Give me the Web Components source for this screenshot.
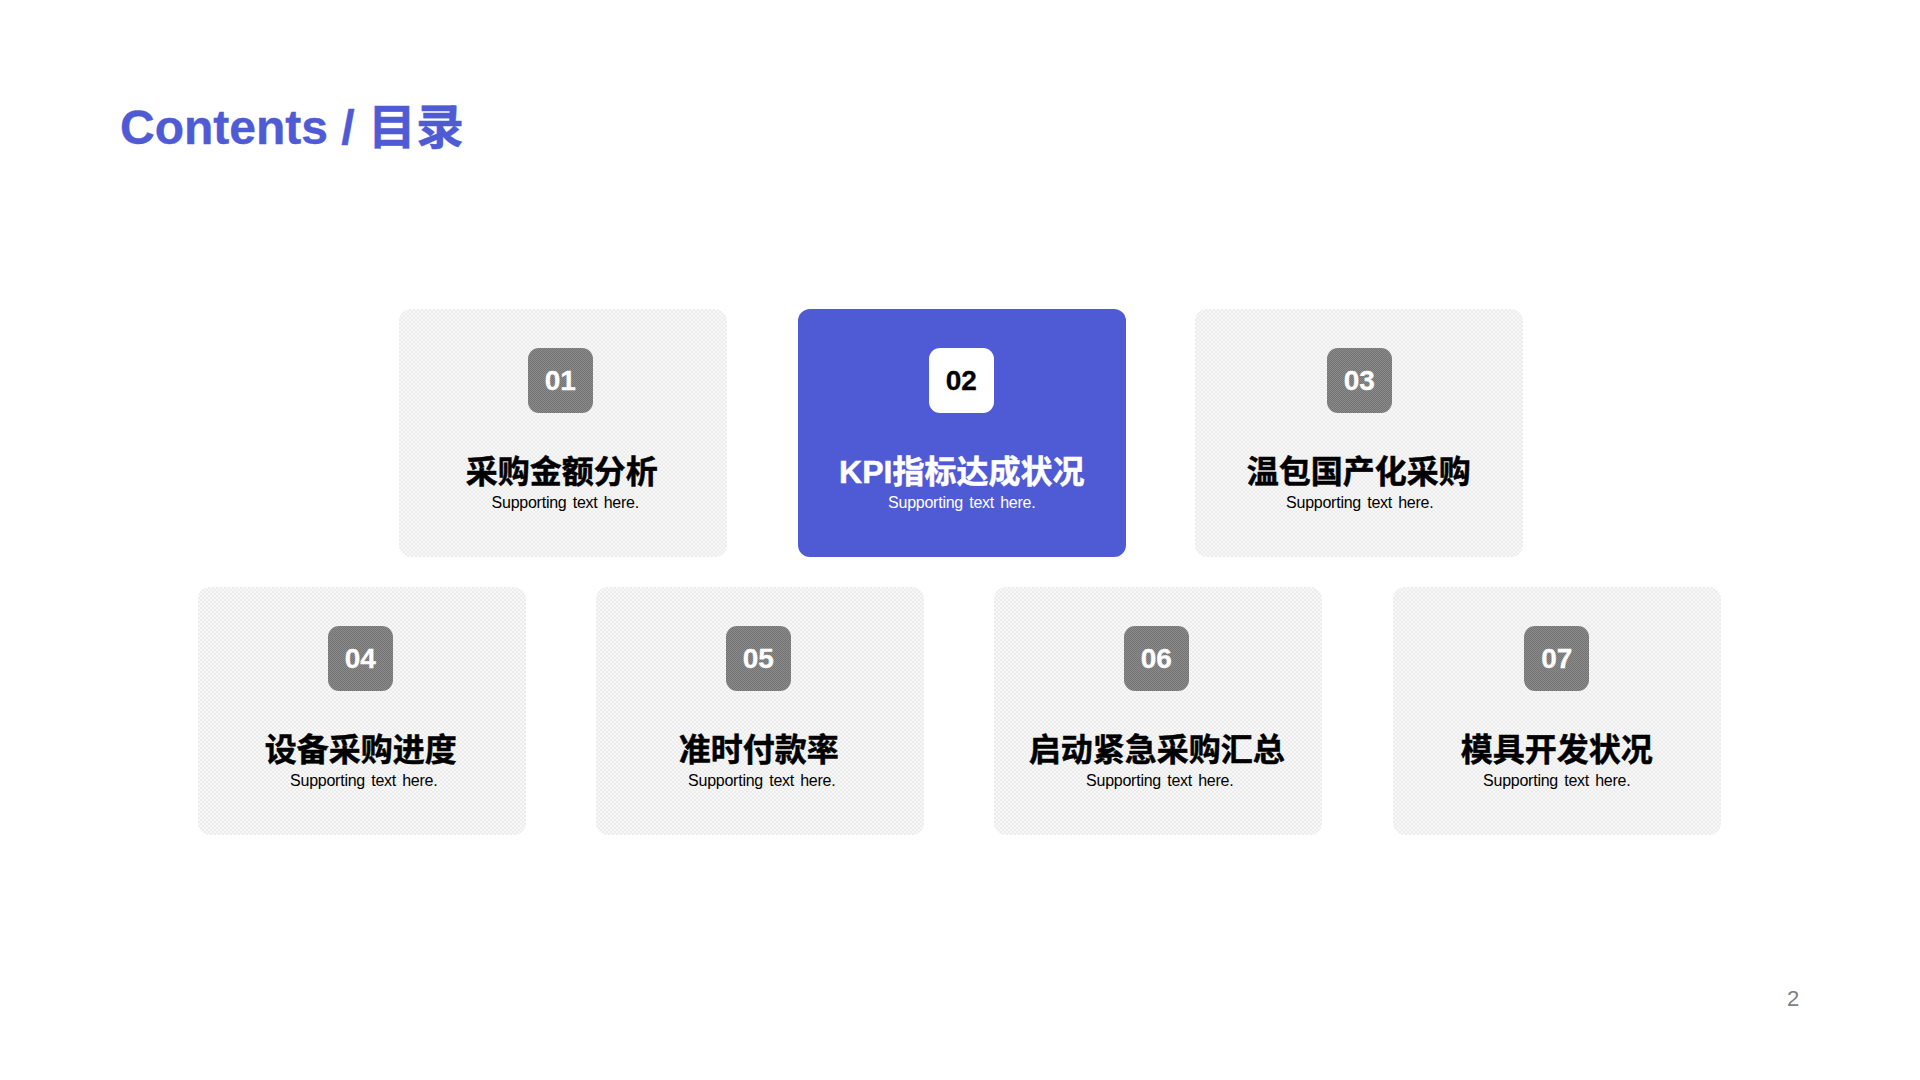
<!DOCTYPE html>
<html lang="zh"><head><meta charset="utf-8"><style>
html,body{margin:0;background:#fff}
</style></head><body>
<toc-slide heading="Contents / 目录" page="2">
<toc-row first>
<toc-card num="01" label="采购金额分析" style="--b:-2.5px;--t:-1px;--s:2.5px"></toc-card>
<toc-card num="02" label="KPI指标达成状况" active style="--ml:71.5px;--b:-.5px"></toc-card>
<toc-card num="03" label="温包国产化采购" style="--ml:69.5px;--s:1px;--b:.5px"></toc-card>
</toc-row>
<toc-row>
<toc-card num="04" label="设备采购进度" style="--b:-1.5px;--t:-1px;--s:2px"></toc-card>
<toc-card num="05" label="准时付款率" style="--ml:70.5px;--b:-1.5px;--t:-1px;--s:2px"></toc-card>
<toc-card num="06" label="启动紧急采购汇总" style="--ml:70.5px;--b:-1.5px;--t:-1px;--s:2px"></toc-card>
<toc-card num="07" label="模具开发状况" style="--ml:71.5px"></toc-card>
</toc-row>
</toc-slide>
<script>
class TocSlide extends HTMLElement{connectedCallback(){const s=this.attachShadow({mode:'open'});s.innerHTML=`<style>
:host{display:flex;flex-direction:column;width:1920px;height:1080px;box-sizing:border-box;position:relative;overflow:hidden;background:#fff;font-family:"Liberation Sans","Noto Sans CJK SC",sans-serif}
h1{margin:0;padding:95px 0 0 120px;height:213px;box-sizing:border-box;font-size:48px;line-height:66px;font-weight:700;color:#4f5bd5;-webkit-text-stroke:.4px #4f5bd5}
.rows{display:flex;flex-direction:column;gap:30px}
.page{position:absolute;left:1787px;top:986px;font-size:22px;line-height:26px;color:#7f7f7f}
</style><h1>${this.getAttribute('heading')}</h1><div class="rows"><slot></slot></div><div class="page">${this.getAttribute('page')}</div>`}}
class TocRow extends HTMLElement{connectedCallback(){const s=this.attachShadow({mode:'open'});s.innerHTML=`<style>
:host{display:flex;padding-left:198px}
:host([first]){padding-left:399px;padding-top:96px}
</style><slot></slot>`}}
class TocCard extends HTMLElement{connectedCallback(){const s=this.attachShadow({mode:'open'});s.innerHTML=`<style>
:host{display:flex;flex-direction:column;align-items:center;box-sizing:border-box;width:327.5px;height:248px;margin-left:var(--ml,0);padding-top:39px;border-radius:12px;color:#000;
background-color:#ececec;background-image:radial-gradient(circle at 1px 1px,#f8f8f8 .9px,transparent 1px),radial-gradient(circle at 3px 3px,#f8f8f8 .9px,transparent 1px);background-size:4px 4px}
:host([active]){background:#4f5bd5;color:#fff}
.n{width:65px;height:65px;box-sizing:border-box;padding-top:1px;border-radius:11px;display:flex;align-items:center;justify-content:center;font-size:28px;font-weight:700;color:#fff;-webkit-text-stroke:.3px currentColor;margin-left:calc(var(--b,0px)*2);
background-color:#7f7f7f;background-image:conic-gradient(#8c8c8c 25%,#727272 0 50%,#8c8c8c 0 75%,#727272 0);background-size:2px 2px}
:host([active]) .n{background:#fff;color:#000}
.t{margin-top:39px;margin-left:calc(var(--t,0px)*2);font-size:32px;line-height:40px;font-weight:700;-webkit-text-stroke:.5px currentColor;white-space:nowrap}
.s{font-size:16px;line-height:22px;margin-top:0;margin-left:calc(var(--s,0px)*2);letter-spacing:-.25px;word-spacing:2px;white-space:nowrap}
</style><div class="n">${this.getAttribute('num')}</div><div class="t">${this.getAttribute('label')}</div><div class="s">Supporting text here.</div>`}}
customElements.define('toc-slide',TocSlide);customElements.define('toc-row',TocRow);customElements.define('toc-card',TocCard);
</script></body></html>
